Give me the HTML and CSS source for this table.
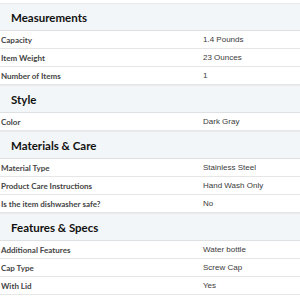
FILE: index.html
```html
<!DOCTYPE html>
<html>
<head>
<meta charset="utf-8">
<link rel="stylesheet" href="styles.css">
</head>
<body>
<div class="specs">
  <section class="group">
    <h2 class="group-title">Measurements</h2>
    <div class="row"><span class="label">Capacity</span><span class="value">1.4 Pounds</span></div>
    <div class="row"><span class="label">Item Weight</span><span class="value">23 Ounces</span></div>
    <div class="row"><span class="label">Number of Items</span><span class="value">1</span></div>
  </section>
  <section class="group">
    <h2 class="group-title">Style</h2>
    <div class="row"><span class="label">Color</span><span class="value">Dark Gray</span></div>
  </section>
  <section class="group">
    <h2 class="group-title">Materials &amp; Care</h2>
    <div class="row"><span class="label">Material Type</span><span class="value">Stainless Steel</span></div>
    <div class="row"><span class="label">Product Care Instructions</span><span class="value">Hand Wash Only</span></div>
    <div class="row"><span class="label">Is the item dishwasher safe?</span><span class="value">No</span></div>
  </section>
  <section class="group">
    <h2 class="group-title">Features &amp; Specs</h2>
    <div class="row"><span class="label">Additional Features</span><span class="value">Water bottle</span></div>
    <div class="row"><span class="label">Cap Type</span><span class="value">Screw Cap</span></div>
    <div class="row"><span class="label">With Lid</span><span class="value">Yes</span></div>
  </section>
</div>
</body>
</html>
```
FILE: styles.css
```css
html, body {
  margin: 0;
  padding: 0;
  background: #ffffff;
}

body {
  font-family: "Lato", "Liberation Sans", sans-serif;
  color: #333333;
}

.specs {
  padding-top: 3px;
}

.group-title {
  margin: 0;
  box-sizing: border-box;
  height: 28px;
  display: flex;
  align-items: center;
  padding-left: 11px;
  background: #f3f6f8;
  border-top: 1px solid #e9ecee;
  border-bottom: 1px solid #dde1e4;
  font-size: 11.5px;
  font-weight: 700;
  color: #111111;
}

.row {
  display: grid;
  grid-template-columns: 202px 1fr;
  align-items: center;
  height: 18px;
  box-sizing: border-box;
  border-bottom: 1px solid #e6e6e6;
  padding-left: 1px;
}

.label {
  font-size: 8px;
  font-weight: 700;
  color: #444444;
  white-space: nowrap;
}

.value {
  font-family: "Liberation Sans", sans-serif;
  font-size: 8px;
  color: #3a3a3a;
  white-space: nowrap;
}
```
